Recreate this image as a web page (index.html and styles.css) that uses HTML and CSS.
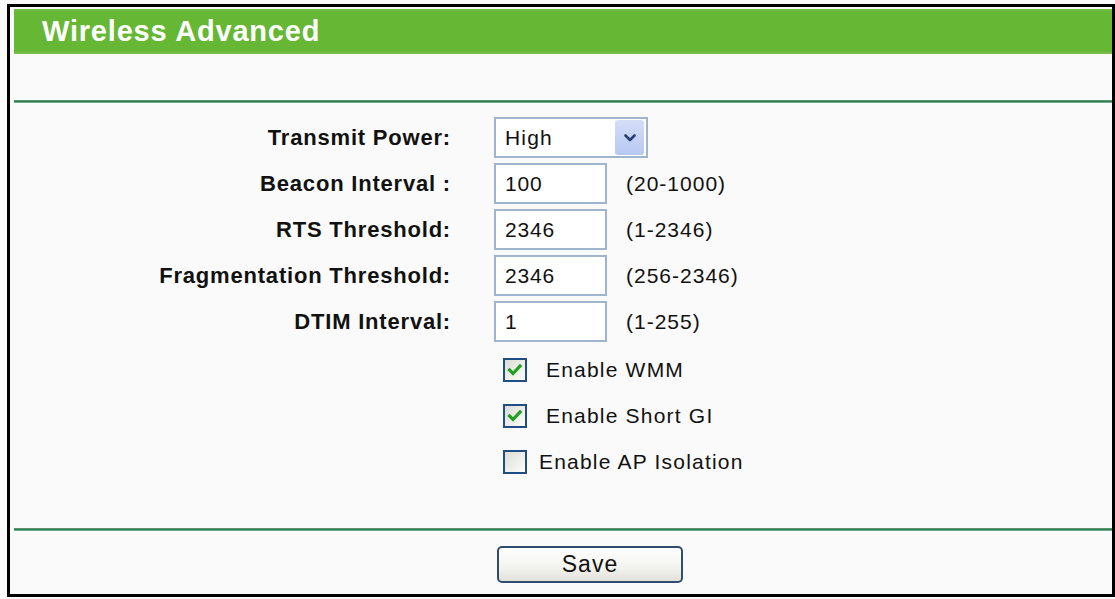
FILE: index.html
```html
<!DOCTYPE html>
<html>
<head>
<meta charset="utf-8">
<title>Wireless Advanced</title>
<link rel="stylesheet" href="styles.css">
</head>
<body>
<div class="frame">
  <div class="header"><h1 class="title">Wireless Advanced</h1></div>
  <div class="spacer"></div>
  <div class="rule"></div>
  <div class="form">
    <div class="row">
      <label class="label">Transmit Power:</label>
      <div class="field">
        <div class="select">
          <span class="select-text">High</span>
          <span class="select-btn">
            <svg width="12" height="8" viewBox="0 0 12 8"><path d="M1.5 1.5 L6 6 L10.5 1.5" fill="none" stroke="#2c3f75" stroke-width="2.6" stroke-linecap="round" stroke-linejoin="round"/></svg>
          </span>
        </div>
      </div>
    </div>
    <div class="row">
      <label class="label">Beacon Interval :</label>
      <div class="field"><input class="text" type="text" value="100"><span class="hint">(20-1000)</span></div>
    </div>
    <div class="row">
      <label class="label">RTS Threshold:</label>
      <div class="field"><input class="text" type="text" value="2346"><span class="hint">(1-2346)</span></div>
    </div>
    <div class="row">
      <label class="label">Fragmentation Threshold:</label>
      <div class="field"><input class="text" type="text" value="2346"><span class="hint">(256-2346)</span></div>
    </div>
    <div class="row">
      <label class="label">DTIM Interval:</label>
      <div class="field"><input class="text" type="text" value="1"><span class="hint">(1-255)</span></div>
    </div>
    <div class="row check-row">
      <span></span>
      <div class="field">
        <span class="box checked"><svg width="16" height="14" viewBox="0 0 16 14"><path d="M2.5 7 L6 10.5 L13 3" fill="none" stroke="#21a121" stroke-width="3.2" stroke-linecap="square"/></svg></span>
        <span class="check-label wide">Enable WMM</span>
      </div>
    </div>
    <div class="row check-row">
      <span></span>
      <div class="field">
        <span class="box checked"><svg width="16" height="14" viewBox="0 0 16 14"><path d="M2.5 7 L6 10.5 L13 3" fill="none" stroke="#21a121" stroke-width="3.2" stroke-linecap="square"/></svg></span>
        <span class="check-label wide">Enable Short GI</span>
      </div>
    </div>
    <div class="row check-row">
      <span></span>
      <div class="field">
        <span class="box"></span>
        <span class="check-label">Enable AP Isolation</span>
      </div>
    </div>
  </div>
  <div class="rule"></div>
  <div class="actions">
    <button class="save" type="button">Save</button>
  </div>
</div>
</body>
</html>
```

FILE: styles.css
```css
html, body {
  margin: 0;
  padding: 0;
  background: #fafafa;
}

body {
  font-family: "Liberation Sans", Arial, sans-serif;
  color: #111;
}

.frame {
  box-sizing: border-box;
  width: 1108px;
  height: 593px;
  margin: 4px 0 0 7px;
  border: 3px solid #000;
  padding: 2px 0 0 4px;
  background: #fafafa;
}

.header {
  height: 45px;
  background: linear-gradient(#79c04f 0px, #66b733 3px, #66b733 42px, #7dc257 45px);
  display: flex;
  align-items: center;
  padding-left: 28px;
}

.title {
  margin: 0;
  color: #fff;
  font-size: 29px;
  font-weight: bold;
  letter-spacing: 0.8px;
  line-height: 1;
}

.spacer {
  height: 46px;
}

.rule {
  height: 3px;
  background: linear-gradient(#7fb394 0, #2f7a4f 1px, #2f7a4f 2px, #b9dcc6 3px);
}

.form {
  padding: 14px 0 43px 0;
}

.row {
  display: grid;
  grid-template-columns: 437px auto;
  column-gap: 43px;
  align-items: center;
  height: 41px;
  margin-bottom: 5px;
}

.row.check-row {
  height: 46px;
  margin-bottom: 0;
}

.label {
  text-align: right;
  font-weight: bold;
  font-size: 22px;
  letter-spacing: 0.8px;
  color: #111;
}

.field {
  display: flex;
  align-items: center;
}

.select {
  box-sizing: border-box;
  width: 154px;
  height: 41px;
  border: 2px solid #9fb4cd;
  background: #fff;
  display: flex;
  align-items: center;
  justify-content: space-between;
  padding: 0 2px 0 9px;
}

.select-text {
  font-size: 21px;
  letter-spacing: 1.2px;
}

.select-btn {
  width: 29px;
  height: 35px;
  border-radius: 3px;
  background: linear-gradient(#d4def8, #b7c8f2);
  display: flex;
  align-items: center;
  justify-content: center;
}

.text {
  box-sizing: border-box;
  width: 113px;
  height: 41px;
  border: 2px solid #9fb4cd;
  background: #fff;
  font-family: "Liberation Sans", Arial, sans-serif;
  font-size: 21px;
  letter-spacing: 0.8px;
  color: #111;
  padding: 0 0 0 9px;
  margin: 0;
  outline: none;
}

.hint {
  margin-left: 19px;
  font-size: 21px;
  letter-spacing: 1px;
  color: #111;
}

.box {
  box-sizing: border-box;
  width: 24px;
  height: 24px;
  margin-left: 9px;
  border: 2px solid #1f4f82;
  background: linear-gradient(135deg, #dcdcd5, #fdfdfc);
  display: flex;
  align-items: center;
  justify-content: center;
}

.check-label {
  margin-left: 12px;
  font-size: 21px;
  letter-spacing: 1.2px;
  color: #111;
}

.check-label.wide {
  margin-left: 19px;
}

.actions {
  padding: 15px 0 0 483px;
}

.save {
  box-sizing: border-box;
  width: 186px;
  height: 37px;
  border: 2px solid #2f4d6e;
  border-radius: 5px;
  background: linear-gradient(#ffffff, #f3f3ee 60%, #e2e1da);
  font-family: "Liberation Sans", Arial, sans-serif;
  font-size: 23px;
  letter-spacing: 1px;
  color: #111;
  padding: 0;
}
```
